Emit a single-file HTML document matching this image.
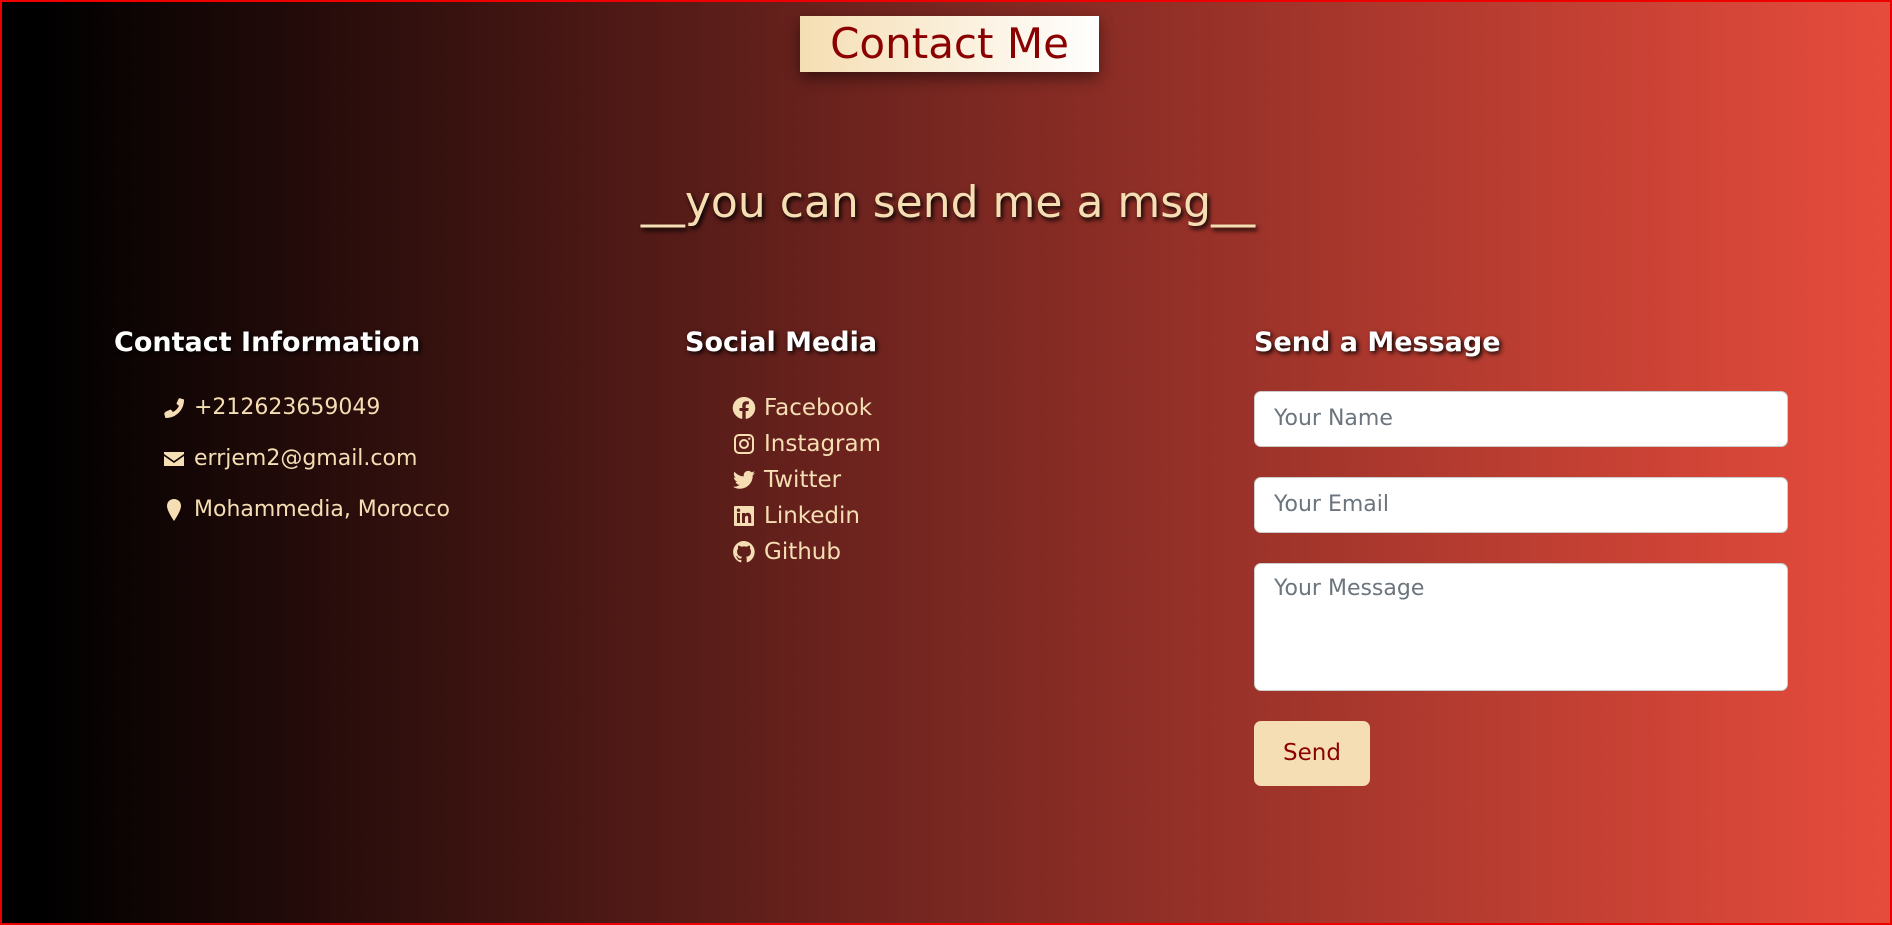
<!DOCTYPE html>
<html><head><meta charset="utf-8"><style>
*{margin:0;padding:0;box-sizing:border-box}
html,body{width:1892px;height:925px;overflow:hidden}
body{background:linear-gradient(to right,#000 2%,#6d231e 45%,#e74c3c 100%);border:2px solid #e00;position:relative;font-family:"Comic Sans MS","DejaVu Sans",sans-serif;color:#f5deb3}
.t{position:absolute;left:798px;top:14px;width:299px;height:56px;background:linear-gradient(to right,#f5deb3,#fff);color:#8b0000;font-size:42px;text-align:center;line-height:56px;box-shadow:0 6px 14px rgba(0,0,0,.45)}
.sub{position:absolute;left:0;width:1892px;top:175px;text-align:center;font-size:44px;text-shadow:2px 3px 5px #000}
h3{position:absolute;top:325px;font-size:27px;color:#fff;text-shadow:2px 2px 5px #000;font-weight:bold}
.it{position:absolute;font-size:23px;display:flex;align-items:center;white-space:nowrap}
.it svg{width:24px;height:24px;margin-right:8px;fill:#f5deb3}
.f{position:absolute;left:1252px;width:534px;background:#fff;border:1px solid #ccc;border-radius:7px;color:#6c757d;font-size:22px;padding-left:19px}
.b{position:absolute;left:1252px;top:719px;width:116px;height:65px;background:#f5deb3;border-radius:7px;color:#8b0000;font-size:23px;text-align:center;line-height:65px}
</style></head><body>
<div class="t">Contact Me</div>
<div class="sub">__you can send me a msg__</div>
<h3 style="left:112px">Contact Information</h3>
<h3 style="left:683px">Social Media</h3>
<h3 style="left:1252px">Send a Message</h3>

<div class="it" style="left:160px;top:393px;font-size:22px"><svg viewBox="0 0 24 24"><path d="M20 15.5l-4-1.8c-.5-.2-1 0-1.3.3l-1.6 2c-2.7-1.3-4.8-3.4-6.1-6.1l2-1.6c.4-.3.5-.8.3-1.3L7.5 3c-.2-.5-.8-.8-1.3-.7L2.6 3.2C2.2 3.3 2 3.7 2 4c0 9.9 8 18 18 18 .4 0 .7-.2.8-.6l.9-3.6c.1-.5-.2-1.1-.7-1.3z" transform="scale(-1,1) translate(-24,0)"/></svg>+212623659049</div>
<div class="it" style="left:160px;top:444px;font-size:22px"><svg viewBox="0 0 24 24"><path d="M2 5h20v2l-10 7L2 7z M2 9l10 7 10-7v10H2z"/></svg>errjem2@gmail.com</div>
<div class="it" style="left:160px;top:495px;font-size:22px"><svg viewBox="0 0 24 24"><path d="M12 1C7.6 1 5 4.3 5 8c0 5 7 15 7 15s7-10 7-15c0-3.7-2.6-7-7-7z"/></svg>Mohammedia, Morocco</div>

<div class="it" style="left:730px;top:393px"><svg viewBox="0 0 24 24"><path d="M12 1a11 11 0 0 0-1.7 21.9V15H7.5v-3h2.8V9.6c0-2.8 1.6-4.3 4.2-4.3 1.2 0 2.4.2 2.4.2v2.7h-1.4c-1.300 0-1.8.8-1.8 1.7V12h3l-.5 3h-2.5v7.9A11 11 0 0 0 12 1z"/></svg>Facebook</div>
<div class="it" style="left:730px;top:429px"><svg viewBox="0 0 24 24"><path fill-rule="evenodd" d="M7 2h10a5 5 0 0 1 5 5v10a5 5 0 0 1-5 5H7a5 5 0 0 1-5-5V7a5 5 0 0 1 5-5zm0 2a3 3 0 0 0-3 3v10a3 3 0 0 0 3 3h10a3 3 0 0 0 3-3V7a3 3 0 0 0-3-3zm5 3a5 5 0 1 1 0 10 5 5 0 0 1 0-10zm0 2a3 3 0 1 0 0 6 3 3 0 0 0 0-6zm5.3-3.5a1.2 1.2 0 1 1 0 2.4 1.2 1.2 0 0 1 0-2.4z"/></svg>Instagram</div>
<div class="it" style="left:730px;top:465px"><svg viewBox="0 0 24 24"><path d="M23 5c-.8.4-1.7.6-2.6.7.9-.6 1.6-1.4 2-2.5-.9.5-1.9.9-2.9 1.1a4.5 4.5 0 0 0-7.700 4.1C8 8.2 4.7 6.4 2.5 3.7c-1.2 2-.6 4.6 1.4 6-.7 0-1.4-.2-2-.6 0 2.2 1.5 4.1 3.6 4.5-.7.2-1.4.2-2 .1.6 1.8 2.3 3.1 4.2 3.1A9 9 0 0 1 1 18.7 12.8 12.8 0 0 0 20.7 7.3c.9-.6 1.7-1.4 2.3-2.3z"/></svg>Twitter</div>
<div class="it" style="left:730px;top:501px"><svg viewBox="0 0 24 24"><path fill-rule="evenodd" d="M3 2h18a1 1 0 0 1 1 1v18a1 1 0 0 1-1 1H3a1 1 0 0 1-1-1V3a1 1 0 0 1 1-1zm2 7v10h3V9zm1.5-4.5a1.7 1.7 0 1 0 0 3.4 1.7 1.7 0 0 0 0-3.4zM10 9v10h3v-5c0-1.5.6-2.3 1.8-2.3 1.1 0 1.4.8 1.4 2.3v5h3v-6c0-2.6-1.3-4.2-3.6-4.2-1.3 0-2.2.6-2.6 1.3V9z"/></svg>Linkedin</div>
<div class="it" style="left:730px;top:537px"><svg viewBox="0 0 24 24"><path d="M12 1a11 11 0 0 0-3.5 21.4c.6.1.8-.2.8-.5v-2c-3.1.7-3.7-1.3-3.7-1.3-.5-1.3-1.2-1.6-1.2-1.6-1-.7.1-.7.1-.7 1.1.1 1.7 1.1 1.7 1.1 1 1.7 2.6 1.2 3.2.9.1-.7.4-1.2.7-1.5-2.4-.3-5-1.2-5-5.4 0-1.2.4-2.2 1.1-2.9-.1-.3-.5-1.4.1-2.9 0 0 .9-.3 3 1.1a10.4 10.4 0 0 1 5.5 0c2.1-1.4 3-1.1 3-1.1.6 1.5.2 2.6.1 2.9.7.8 1.1 1.7 1.1 2.9 0 4.2-2.6 5.2-5 5.4.4.3.7 1 .7 2v3c0 .3.2.6.8.5A11 11 0 0 0 12 1z"/></svg>Github</div>

<div class="f" style="top:389px;height:56px;line-height:54px">Your Name</div>
<div class="f" style="top:475px;height:56px;line-height:54px">Your Email</div>
<div class="f" style="top:561px;height:128px;padding-top:10px;line-height:30px">Your Message</div>
<div class="b">Send</div>
</body></html>
